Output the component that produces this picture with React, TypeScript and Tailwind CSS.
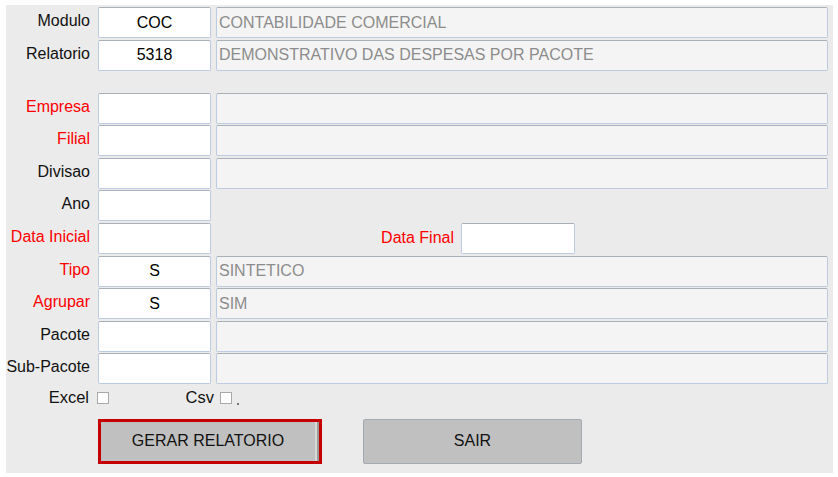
import React from "react";

const font = { fontFamily: '"Liberation Sans", Arial, sans-serif' };

function Label({ text, red }: { text: string; red?: boolean }) {
  return (
    <div
      className={`w-[84px] shrink-0 text-right text-[16px] leading-[30px] pb-[3px] ${red ? "text-[#ff0000]" : "text-[#111]"}`}
    >
      {text}
    </div>
  );
}

function CodeBox({ value }: { value?: string }) {
  return (
    <div className="ml-[8px] w-[113px] h-[31px] shrink-0 bg-white border border-[#bccbe0] border-t-[#aab0b8] rounded-[2px] flex items-center justify-center text-[16px] text-black">
      {value}
    </div>
  );
}

function DescBox({ value }: { value?: string }) {
  return (
    <div className="ml-[5px] w-[612px] h-[31px] shrink-0 bg-[#f4f4f4] border border-[#bccbe0] border-t-[#aab0b8] rounded-[2px] flex items-center pl-[2px] text-[16px] text-[#8c8c8c]">
      {value}
    </div>
  );
}

function Row({
  label,
  red,
  code,
  desc,
  noDesc,
  children,
  className,
}: {
  label: string;
  red?: boolean;
  code?: string;
  desc?: string;
  noDesc?: boolean;
  children?: React.ReactNode;
  className?: string;
}) {
  return (
    <div className={`flex items-center h-[31px] ${className ?? ""}`}>
      <Label text={label} red={red} />
      <CodeBox value={code} />
      {!noDesc && <DescBox value={desc} />}
      {children}
    </div>
  );
}

export default function App() {
  return (
    <div className="w-[838px] h-[477px] bg-white pt-[5px] pl-[6px]" style={font}>
      <div className="w-[827px] h-[468px] bg-[#ebebeb] pt-[2px] flex flex-col gap-[1.6px]">
        <Row label="Modulo" code="COC" desc="CONTABILIDADE COMERCIAL" />
        <Row label="Relatorio" code="5318" desc="DEMONSTRATIVO DAS DESPESAS POR PACOTE" />
        <Row label="Empresa" red className="mt-[20.4px]" />
        <Row label="Filial" red />
        <Row label="Divisao" />
        <Row label="Ano" noDesc />
        <Row label="Data Inicial" red noDesc>
          <div className="w-[243px] shrink-0 text-right text-[16px] text-[#ff0000] leading-[30px] pb-[1px]">
            Data Final
          </div>
          <div className="ml-[7px] w-[114px] h-[31px] bg-white border border-[#bccbe0] border-t-[#aab0b8] rounded-[2px]" />
        </Row>
        <Row label="Tipo" red code="S" desc="SINTETICO" />
        <Row label="Agrupar" red code="S" desc="SIM" />
        <Row label="Pacote" />
        <Row label="Sub-Pacote" />
        <div className="flex items-center h-[16px] mt-[4px]">
          <div className="w-[83px] shrink-0 text-right text-[16.5px] text-[#111] leading-[16px] pb-[2px]">Excel</div>
          <div className="ml-[8px] w-[12px] h-[12px] bg-white border border-[#a9a9a9]" />
          <div className="w-[105px] shrink-0 text-right text-[16.5px] text-[#111] leading-[16px] pb-[2px]">Csv</div>
          <div className="ml-[6px] w-[12px] h-[12px] bg-white border border-[#a9a9a9]" />
          <div className="ml-[5px] mt-[12px] w-[2px] h-[2px] bg-[#777]" />
        </div>
        <div className="flex items-start mt-[11px]">
          <div className="ml-[92px] w-[224px] h-[45px] border-[3px] border-[#c40000] bg-[#c0c0c0] flex">
            <div className="flex-1 flex items-center justify-center text-[16px] text-[#111]">
              GERAR RELATORIO
            </div>
            <div className="w-[2px] h-full bg-[#d8d8d8]" />
            <div className="w-[2px] h-full bg-[#9a9a9a]" />
          </div>
          <div className="ml-[41px] w-[219px] h-[45px] bg-[#c0c0c0] border border-[#a3aab3] rounded-[2px] flex items-center justify-center text-[16px] text-[#111]">
            SAIR
          </div>
        </div>
      </div>
    </div>
  );
}
